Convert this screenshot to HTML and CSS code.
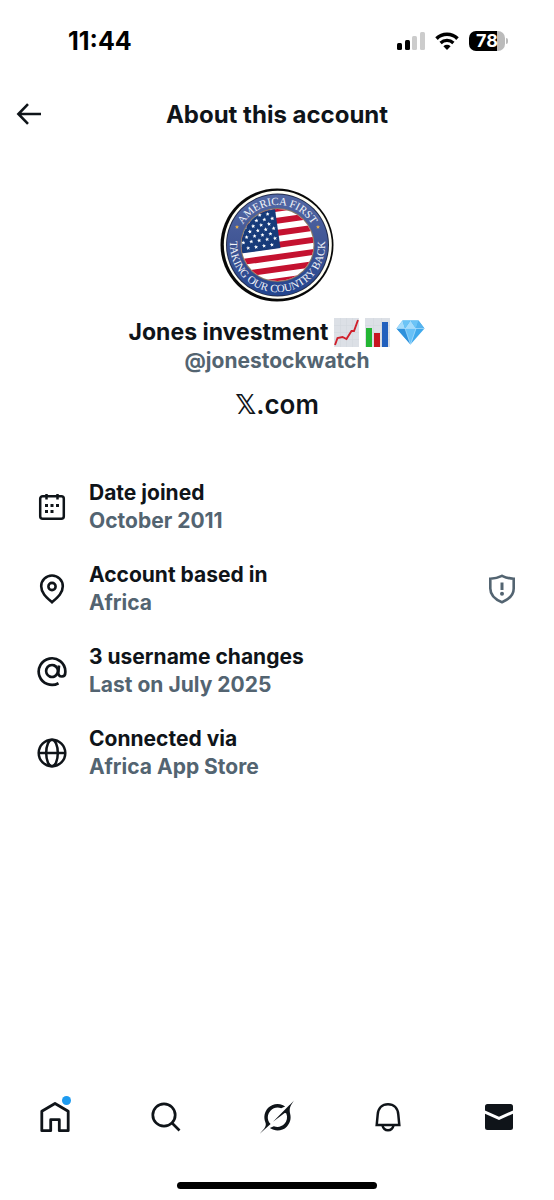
FILE: index.html
```html
<!DOCTYPE html>
<html lang="en">
<head>
  <meta charset="UTF-8">
  <meta name="viewport" content="width=device-width, initial-scale=1.0">
  <title>About this account</title>
  <link rel="stylesheet" href="styles.css">
</head>
<body>
  <div class="status-bar">
    <span class="time">11:44</span>
    <div class="status-icons">
      <svg width="28" height="18" viewBox="0 0 28 18">
        <rect x="0" y="11" width="5" height="7" rx="1.5" fill="#000"/>
        <rect x="8" y="8" width="5" height="10" rx="1.5" fill="#000"/>
        <rect x="15" y="4" width="5" height="14" rx="1.5" fill="#ccc"/>
        <rect x="23" y="0" width="5" height="18" rx="1.5" fill="#ccc"/>
      </svg>
      <svg width="24" height="18" viewBox="0 0 24 18">
        <path d="M1.5 6.6a15 15 0 0 1 21 0" fill="none" stroke="#000" stroke-width="3.6"/>
        <path d="M5.6 11a9.2 9.2 0 0 1 12.8 0" fill="none" stroke="#000" stroke-width="3.2"/>
        <path d="M8.4 14.2a5.2 5.2 0 0 1 7.2 0L12 18z" fill="#000"/>
      </svg>
      <div class="battery"><span>78</span></div>
    </div>
  </div>

  <header class="top-bar">
    <button class="icon-button" aria-label="Back">
      <svg width="26" height="24" viewBox="0 0 26 24" fill="none" stroke="#0f1419" stroke-width="2.6">
        <path d="M12 2.2L2.4 12l9.6 9.8M2.6 12H25"/>
      </svg>
    </button>
    <h1>About this account</h1>
  </header>

  <main>
    <section class="profile">
      <svg class="avatar" viewBox="0 0 114 114" role="img" aria-label="America First, Taking Our Country Back">
        <defs>
          <clipPath id="flag-clip"><circle cx="57.5" cy="57" r="36"/></clipPath>
          <path id="arc-top" d="M17.500 57a40 40 0 0 1 80 0"/>
          <path id="arc-bottom" d="M13 40A47.500 47.500 0 1 0 102 40"/>
          <linearGradient id="ring-blue" x1="0" y1="0" x2="0" y2="1">
            <stop offset="0" stop-color="#5268a5"/>
            <stop offset="0.5" stop-color="#405594"/>
            <stop offset="1" stop-color="#23458f"/>
          </linearGradient>
          <path id="star" d="M0-2.1L.6-.7 2-.6.9.4 1.3 1.8 0 1-1.3 1.8-.9.4-2-.6-.6-.7z"/>
        </defs>
        <circle cx="57" cy="57" r="56.5" fill="#080808"/>
        <circle cx="57.8" cy="56.8" r="54" fill="#fffef4"/>
        <circle cx="57.5" cy="57" r="51.5" fill="#222c4d"/>
        <circle cx="57.5" cy="57" r="50.5" fill="url(#ring-blue)"/>
        <circle cx="57.5" cy="57" r="37" fill="#8c7b62"/>
        <g clip-path="url(#flag-clip)">
          <g transform="rotate(-8 57 57)">
            <rect x="10" y="10" width="100" height="100" fill="#fff"/>
            <path stroke="#c41230" stroke-width="6" d="M10 21h95M10 33h95M10 45h95M10 57h95M10 69h95M10 81h95M10 93h95"/>
            <rect x="10" y="10" width="50" height="50.500" fill="#173b7a"/>
            <g fill="#fff">
              <use href="#star" x="48" y="20"/><use href="#star" x="56" y="20"/>
              <use href="#star" x="44" y="25"/><use href="#star" x="52" y="25"/>
              <use href="#star" x="32" y="30"/><use href="#star" x="40" y="30"/><use href="#star" x="48" y="30"/><use href="#star" x="56" y="30"/>
              <use href="#star" x="28" y="35"/><use href="#star" x="36" y="35"/><use href="#star" x="44" y="35"/><use href="#star" x="52" y="35"/>
              <use href="#star" x="24" y="40"/><use href="#star" x="32" y="40"/><use href="#star" x="40" y="40"/><use href="#star" x="48" y="40"/><use href="#star" x="56" y="40"/>
              <use href="#star" x="28" y="45"/><use href="#star" x="36" y="45"/><use href="#star" x="44" y="45"/><use href="#star" x="52" y="45"/>
              <use href="#star" x="24" y="50"/><use href="#star" x="32" y="50"/><use href="#star" x="40" y="50"/><use href="#star" x="48" y="50"/><use href="#star" x="56" y="50"/>
              <use href="#star" x="28" y="56"/><use href="#star" x="36" y="56"/><use href="#star" x="44" y="56"/><use href="#star" x="52" y="56"/>
            </g>
          </g>
        </g>
        <g fill="#e8b04c">
          <use href="#star" x="17" y="39"/>
          <use href="#star" x="98" y="39"/>
        </g>
        <text class="ring-text"><textPath href="#arc-top" startOffset="50%" text-anchor="middle">AMERICA FIRST</textPath></text>
        <text class="ring-text"><textPath href="#arc-bottom" startOffset="50%" text-anchor="middle">TAKING OUR COUNTRY BACK</textPath></text>
      </svg>

      <h2 class="name">
        <span>Jones investment</span>
        <svg width="25" height="29" viewBox="0 0 25 29">
          <rect width="25" height="29" fill="#dce0e6"/>
          <path d="M0 7.5h25M0 14.5h25M0 21.5h25M6.5 0v29M12.5 0v29M18.5 0v29" stroke="#d3d8de" stroke-width="0.7"/>
          <path d="M1 27l2.500-7 5-1 4 2 5-8 2.500 0L24 2" fill="none" stroke="#d0202c" stroke-width="1.9"/>
        </svg>
        <svg width="25" height="29" viewBox="0 0 25 29">
          <rect width="25" height="29" fill="#dce0e6"/>
          <path d="M0 7.5h25M0 14.5h25M0 21.5h25M8.5 0v29M16.500 0v29" stroke="#d3d8de" stroke-width="0.7"/>
          <rect x="1" y="10" width="6" height="19" fill="#23b533"/>
          <rect x="9" y="15" width="6" height="14" fill="#c81420"/>
          <rect x="17" y="4" width="6" height="25" fill="#2160bd"/>
        </svg>
        <svg width="29" height="25" viewBox="0 0 29 25">
          <path d="M6.5.5h16L28.5 8.5 14.5 24.5.5 8.5z" fill="#3fa9ec"/>
          <path d="M6.5.5L9 8.5H.5zM14.5.5L20 8.5H9z" fill="#a5dcfb"/>
          <path d="M22.5.5L20 8.5 14.5.5zM6.5.5h8L9 8.5z" fill="#6cc4f6"/>
          <path d="M22.5.5l6 8H20z" fill="#55b3ee"/>
          <path d="M9 8.5h11l-5.5 16z" fill="#68c1f7"/>
          <path d="M.5 8.5H9l5.5 16z" fill="#2e91dc"/>
          <path d="M.5 8.5h28M9 8.5l5.5 16 5.5-16" fill="none" stroke="#c5eaff" stroke-width="0.6"/>
        </svg>
      </h2>
      <p class="handle">@jonestockwatch</p>
      <p class="site"><span class="x-logo">𝕏</span>.com</p>
    </section>

    <ul class="details">
      <li>
        <svg class="detail-icon" viewBox="0 0 32 32" fill="none" stroke="#0f1419" stroke-width="2.5">
          <rect x="4.2" y="5.2" width="23.6" height="22.6" rx="2.5"/>
          <path d="M10.5 3v5.5M21.5 3v5.5"/>
          <path d="M9 14.5h3M14.5 14.5h3M20 14.5h3M9 20.5h3M14.5 20.5h3" stroke-width="3"/>
        </svg>
        <div class="detail-text">
          <h3>Date joined</h3>
          <p>October 2011</p>
        </div>
      </li>
      <li>
        <svg class="detail-icon" viewBox="0 0 32 32" fill="none" stroke="#0f1419" stroke-width="2.6">
          <path d="M16 29.2C11 24.9 5.2 20.5 5.2 13.3a10.8 10.8 0 0 1 21.6 0c0 7.2-5.8 11.6-10.8 15.9z"/>
          <circle cx="16" cy="13.5" r="3.6"/>
        </svg>
        <div class="detail-text">
          <h3>Account based in</h3>
          <p>Africa</p>
        </div>
        <button class="icon-button" aria-label="Location info">
          <svg width="28" height="30" viewBox="0 0 28 30" fill="none" stroke="#536471" stroke-width="2.6">
            <path d="M14 1.8C10 3.7 6.5 4.5 2.3 4.7v9.8c0 6.5 5 11 11.7 13.7 6.7-2.7 11.7-7.2 11.7-13.7V4.7C21.5 4.5 18 3.7 14 1.8z"/>
            <path d="M14 8.5v7.5" stroke-width="3"/>
            <circle cx="14" cy="19.8" r="2" fill="#536471" stroke="none"/>
          </svg>
        </button>
      </li>
      <li>
        <svg class="detail-icon" viewBox="0 0 32 32" fill="none" stroke="#0f1419" stroke-width="2.7">
          <path d="M22.500 28.200A13.300 13.300 0 1 1 29.300 16v1.500c0 2.600-1.300 4-3.400 4-2.600 0-3.800-1.600-3.600-4.200l.7-6.800"/>
          <ellipse cx="16" cy="16" rx="5.900" ry="6" transform="rotate(20 16 16)"/>
        </svg>
        <div class="detail-text">
          <h3>3 username changes</h3>
          <p>Last on July 2025</p>
        </div>
      </li>
      <li>
        <svg class="detail-icon" viewBox="0 0 32 32" fill="none" stroke="#0f1419" stroke-width="2.5">
          <circle cx="16" cy="16" r="13.3"/>
          <ellipse cx="16" cy="16" rx="5.8" ry="13.3"/>
          <path d="M3 16h26"/>
        </svg>
        <div class="detail-text">
          <h3>Connected via</h3>
          <p>Africa App Store</p>
        </div>
      </li>
    </ul>
  </main>

  <nav class="tab-bar">
    <a href="#" class="tab" aria-label="Home">
      <svg width="30" height="32" viewBox="0 0 30 32" fill="none" stroke="#0f1419" stroke-width="2.8">
        <path d="M15 2.5L28.2 10.3V29.7H19.3V18.7H10.7V29.7H1.8V10.3z" stroke-linejoin="round"/>
      </svg>
      <span class="dot"></span>
    </a>
    <a href="#" class="tab" aria-label="Search">
      <svg width="30" height="30" viewBox="0 0 30 30" fill="none" stroke="#0f1419" stroke-width="2.7">
        <circle cx="13" cy="13" r="11.2"/>
        <path d="M21 21l7.5 7.5"/>
      </svg>
    </a>
    <a href="#" class="tab" aria-label="Grok">
      <svg width="36" height="34" viewBox="0 0 33 32" fill="#0f1419">
        <path d="M12.745 20.54l10.97-8.19c.539-.4 1.307-.244 1.564.38 1.349 3.288.746 7.241-1.938 9.955-2.683 2.714-6.417 3.31-9.83 1.954l-3.728 1.745c5.347 3.697 11.84 2.782 15.898-1.324 3.219-3.255 4.216-7.692 3.284-11.693l.008.009c-1.351-5.878.332-8.227 3.782-13.031L33 0l-4.54 4.59v-.014L12.743 20.544m-2.263 1.987c-3.837-3.707-3.175-9.446.1-12.755 2.42-2.449 6.388-3.448 9.852-1.979l3.72-1.737c-.67-.49-1.53-1.017-2.515-1.387-4.455-1.854-9.789-.931-13.41 2.728-3.483 3.523-4.579 8.94-2.697 13.561 1.405 3.454-.899 5.898-3.22 8.364C1.49 30.2.666 31.074 0 32l10.478-9.466"/>
      </svg>
    </a>
    <a href="#" class="tab" aria-label="Notifications">
      <svg width="28" height="30" viewBox="0 0 28 30" fill="none" stroke="#0f1419" stroke-width="2.5">
        <path d="M2.700 23L3.700 12.500C4.200 6 8.300 2.200 14 2.200s9.800 3.800 10.300 10.300l1 10.500z"/>
        <path d="M8.500 23.5c.7 3 2.7 4.8 5.5 4.8s4.8-1.8 5.500-4.8"/>
      </svg>
    </a>
    <a href="#" class="tab" aria-label="Messages">
      <svg width="30" height="28" viewBox="0 0 30 28" fill="#0f1419">
        <path d="M1 7.500V3.500A2.500 2.500 0 0 1 3.500 1h23A2.500 2.500 0 0 1 29 3.500v4L15 13.700z"/>
        <path d="M1 10.700l14 6.400 14-6.400v13.800a2.500 2.500 0 0 1-2.500 2.500h-23A2.500 2.500 0 0 1 1 24.500z"/>
      </svg>
    </a>
  </nav>
  <div class="home-indicator"></div>
</body>
</html>
```
FILE: styles.css
```css
* {
  margin: 0;
  padding: 0;
  box-sizing: border-box;
}

body {
  display: flex;
  flex-direction: column;
  min-height: 100vh;
  background-color: #fff;
  color: #0f1419;
  font-family: Inter, "Liberation Sans", sans-serif;
}

svg {
  display: block;
  flex-shrink: 0;
}

button {
  border: none;
  background: none;
  cursor: pointer;
}

.status-bar {
  display: flex;
  justify-content: space-between;
  align-items: center;
  height: 82px;
  padding: 0 49px 0 68px;
  color: #000;
}

.time {
  font-size: 25px;
  font-weight: 700;
}

.status-icons {
  display: flex;
  align-items: center;
  gap: 10px;
}

.battery {
  position: relative;
  width: 36px;
  height: 20px;
  border-radius: 7px;
  background: linear-gradient(to right, #000 78%, #bbb 78%);
  color: #fff;
  font-size: 18px;
  font-weight: 700;
  line-height: 20px;
  text-align: center;
}

.battery::after {
  content: "";
  position: absolute;
  right: -3px;
  top: 7px;
  width: 2px;
  height: 6px;
  border-radius: 0 2px 2px 0;
  background-color: #bbb;
}

.top-bar {
  display: grid;
  grid-template-columns: 40px 1fr 40px;
  align-items: center;
  height: 64px;
  padding: 0 16px;
}

.top-bar h1 {
  font-size: 24px;
  font-weight: 700;
  text-align: center;
}

.profile {
  display: flex;
  flex-direction: column;
  align-items: center;
  padding-top: 42px;
}

.avatar {
  width: 114px;
  height: 114px;
  margin-bottom: 15px;
}

.ring-text {
  fill: #f2f4f8;
  font-family: "Liberation Serif", serif;
  font-size: 11px;
}

.name {
  display: flex;
  align-items: center;
  height: 30px;
  font-size: 23px;
  font-weight: 700;
  gap: 6px;
}

.handle {
  color: #536471;
  font-size: 21px;
  font-weight: 700;
  line-height: 28px;
}

.site {
  margin-top: 14px;
  font-size: 26px;
  font-weight: 600;
  line-height: 32px;
}

.x-logo {
  font-family: "DejaVu Sans", sans-serif;
  font-weight: 700;
}

.details {
  display: flex;
  flex-direction: column;
  gap: 26px;
  padding: 58px 38px 0 36px;
  list-style: none;
}

.details li {
  display: flex;
  align-items: center;
  gap: 21px;
}

.detail-icon {
  width: 32px;
  height: 32px;
}

.detail-text {
  flex: 1;
  font-size: 21px;
  line-height: 28px;
}

.detail-text h3 {
  font-size: 21px;
  font-weight: 700;
}

.detail-text p {
  color: #536471;
  font-weight: 700;
}

.tab-bar {
  display: flex;
  margin-top: auto;
}

.tab {
  position: relative;
  display: flex;
  flex: 1;
  align-items: center;
  justify-content: center;
  height: 60px;
}

.dot {
  position: absolute;
  top: 9px;
  left: calc(50% + 7px);
  width: 9px;
  height: 9px;
  border-radius: 50%;
  background-color: #1d9bf0;
}

.home-indicator {
  width: 36%;
  height: 7px;
  margin: 35px auto 11px;
  border-radius: 4px;
  background-color: #000;
}
```
